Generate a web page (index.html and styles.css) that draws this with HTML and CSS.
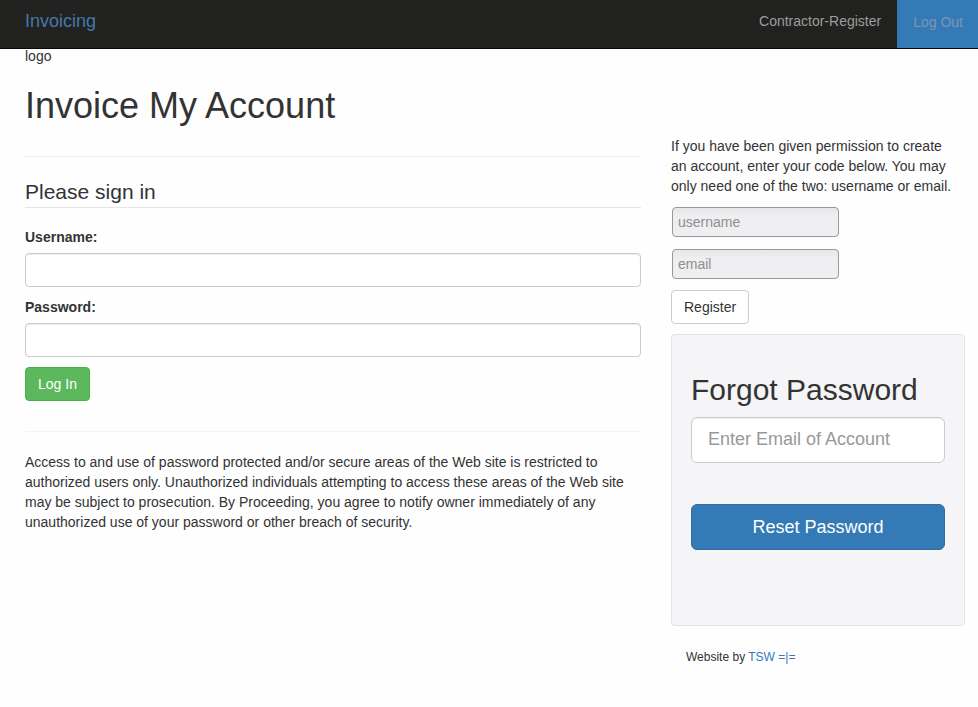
FILE: index.html
```html
<!DOCTYPE html>
<html lang="en">
<head>
<meta charset="utf-8">
<meta name="viewport" content="width=device-width, initial-scale=1">
<title>Invoicing</title>
<link rel="stylesheet" href="styles.css">
</head>
<body>
<nav class="navbar">
  <a class="brand" href="#">Invoicing</a>
  <div class="nav-links">
    <a class="nav-link" href="#">Contractor-Register</a>
    <a class="nav-link logout" href="#">Log Out</a>
  </div>
</nav>
<div class="container">
  <main class="main">
    <div class="logo">logo</div>
    <h1>Invoice My Account</h1>
    <hr>
    <form class="signin">
      <fieldset>
        <legend>Please sign in</legend>
        <label for="login-user">Username:</label>
        <input class="control" id="login-user" type="text">
        <label for="login-pass">Password:</label>
        <input class="control" id="login-pass" type="password">
        <button class="btn btn-success" type="submit">Log In</button>
      </fieldset>
    </form>
    <hr class="rule-low">
    <p class="notice">Access to and use of password protected and/or secure areas of the Web site is restricted to authorized users only. Unauthorized individuals attempting to access these areas of the Web site may be subject to prosecution. By Proceeding, you agree to notify owner immediately of any unauthorized use of your password or other breach of security.</p>
  </main>
  <aside class="side">
    <form class="register">
      <p>If you have been given permission to create an account, enter your code below. You may only need one of the two: username or email.</p>
      <div class="codes">
        <input class="code" type="text" placeholder="username" aria-label="username">
        <input class="code" type="text" placeholder="email" aria-label="email">
      </div>
      <button class="btn btn-default" type="submit">Register</button>
    </form>
    <form class="well">
      <h2>Forgot Password</h2>
      <input class="control control-lg" type="email" placeholder="Enter Email of Account" aria-label="Enter Email of Account">
      <button class="btn btn-primary" type="submit">Reset Password</button>
    </form>
    <footer>Website by <a href="#">TSW =|=</a></footer>
  </aside>
</div>
</body>
</html>
```
FILE: styles.css
```css
* {
  box-sizing: border-box;
}

body {
  margin: 0;
  font: 14px/20px "Liberation Sans", Arial, sans-serif;
  color: #333;
  background: #fefefe;
}

input,
button {
  font: inherit;
}

a {
  color: #337ab7;
  text-decoration: none;
}

.navbar {
  display: flex;
  justify-content: space-between;
  height: 49px;
  padding-left: 25px;
  background: #212220;
  border-bottom: 1px solid #080808;
}

.brand {
  padding-top: 11px;
  font-size: 18px;
  color: #4577ab;
}

.nav-links {
  display: flex;
}

.nav-link {
  padding: 11px 16px;
  color: #9d9d9d;
}

.logout {
  padding: 12px 15px 12px 16px;
  color: #7f96ae;
  background: #337ab7;
}

.container {
  display: grid;
  grid-template-columns: minmax(0, 616fr) minmax(0, 294fr);
  gap: 30px;
  padding: 0 13px 0 25px;
}

.logo {
  margin-top: -3px;
}

h1,
h2 {
  margin: 0;
  font-weight: normal;
}

h1 {
  margin-top: 20px;
  font-size: 36px;
  line-height: 40px;
}

hr {
  margin: 30px 0 20px;
  border: 0;
  border-top: 1px solid #eee;
}

.rule-low {
  border-color: #f4f4f5;
}

fieldset {
  display: flex;
  flex-direction: column;
  align-items: flex-start;
  min-width: 0;
  margin: 0;
  padding: 0;
  border: 0;
}

legend {
  width: 100%;
  margin-bottom: 19px;
  padding: 0;
  font-size: 21px;
  line-height: 30px;
  border-bottom: 1px solid #e5e5e5;
}

label {
  margin-bottom: 6px;
  font-weight: bold;
}

.control {
  width: 100%;
  height: 34px;
  margin-bottom: 10px;
  padding: 6px 12px;
  color: #555;
  background: #fff;
  border: 1px solid #ccc;
  border-radius: 4px;
  box-shadow: inset 0 1px 1px rgba(0, 0, 0, 0.075);
}

.control::placeholder {
  color: #999;
}

.btn {
  padding: 6px 12px;
  border: 1px solid;
  border-radius: 4px;
}

.btn-success {
  color: #fff;
  background: #5cb85c;
  border-color: #4cae4c;
}

.btn-default {
  color: #333;
  background: #fff;
  border-color: #ccc;
}

.btn-primary {
  width: 100%;
  padding: 10px 16px;
  font-size: 18px;
  line-height: 24px;
  color: #fff;
  background: #337ab7;
  border-color: #2e6da4;
  border-radius: 6px;
}

.notice {
  margin: 0;
}

.side {
  padding-top: 87px;
}

.register {
  display: flex;
  flex-direction: column;
  align-items: flex-start;
}

.register p {
  margin: 0 0 11px;
  padding-right: 8px;
}

.codes {
  display: grid;
  gap: 12px;
  margin: 0 0 11px 1px;
}

.code {
  width: 167px;
  height: 30px;
  padding: 0 5px;
  background: linear-gradient(#e6e5e7, #efeef0 30%);
  border: 1px solid #99979c;
  border-radius: 4px;
}

.code::placeholder {
  color: #8f8f8f;
}

.well {
  min-height: 292px;
  margin-top: 10px;
  padding: 35px 19px 19px;
  background: #f5f4f6;
  border: 1px solid #e3e3e3;
  border-radius: 4px;
}

h2 {
  margin-bottom: 8px;
  font-size: 30px;
  line-height: 39px;
}

.control-lg {
  height: 46px;
  margin-bottom: 41px;
  padding: 9px 16px 11px;
  font-size: 18px;
  border-radius: 6px;
}

footer {
  padding: 21px 15px;
  font-size: 12px;
}
```
